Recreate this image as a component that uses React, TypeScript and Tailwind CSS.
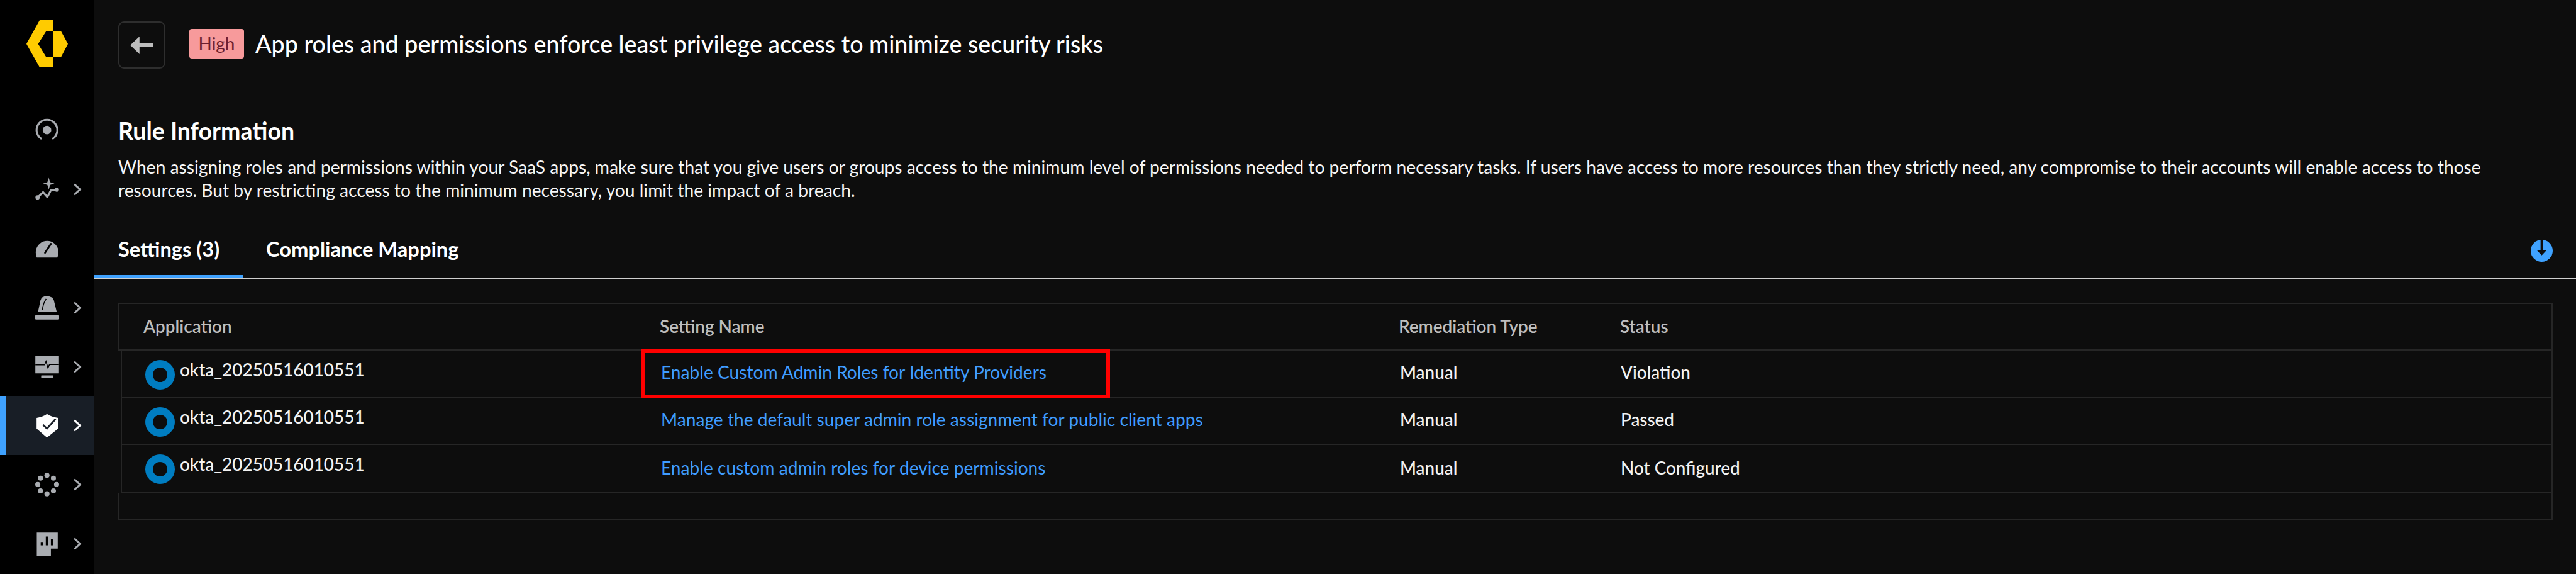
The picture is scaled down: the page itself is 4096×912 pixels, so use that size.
import React from "react";

const GRAY = "#a9acb1";

function Chevron({ color = GRAY }: { color?: string }) {
  return (
    <svg viewBox="0 0 46 66" className="w-[14px] h-[20px]">
      <path d="M7 5 L37 33 L7 61" fill="none" stroke={color} strokeWidth="10" />
    </svg>
  );
}

function Radar() {
  return (
    <svg viewBox="178 605 122 122" className="w-[38px] h-[38px]">
      <circle cx="238" cy="665" r="22" fill={GRAY} />
      <path d="M207 708 A53 53 0 1 1 269 708" fill="none" stroke={GRAY} strokeWidth="10" strokeLinecap="round" />
    </svg>
  );
}

function Spark() {
  return (
    <svg viewBox="178 910 122 122" className="w-[38px] h-[38px]">
      <path d="M190 1012 L218 985 L240 1010 L258 975 L290 972" fill="none" stroke={GRAY} strokeWidth="10" strokeLinejoin="round" />
      <circle cx="190" cy="1012" r="11" fill={GRAY} />
      <circle cx="288" cy="972" r="11" fill={GRAY} />
      <path d="M247 912 L254 934 L276 941 L254 948 L247 970 L240 948 L218 941 L240 934 Z" fill={GRAY} />
    </svg>
  );
}

function Gauge() {
  return (
    <svg viewBox="178 1220 122 105" className="w-[38px] h-[33px]">
      <path d="M186 1320 Q178 1300 182 1282 A58 58 0 0 1 296 1282 Q299 1302 291 1320 Z" fill={GRAY} />
      <path d="M228 1296 L258 1250" stroke="#000" strokeWidth="9" strokeLinecap="round" />
    </svg>
  );
}

function Alarm() {
  return (
    <svg viewBox="178 72 122 122" className="w-[38px] h-[38px]">
      <path d="M192 155 L205 95 Q210 74 236 74 Q266 74 273 95 L288 155 Z" fill={GRAY} />
      <path d="M214 145 Q219 108 234 88" fill="none" stroke="#000" strokeWidth="5" />
      <rect x="178" y="170" width="122" height="23" rx="4" fill={GRAY} />
    </svg>
  );
}

function Monitor() {
  return (
    <svg viewBox="178 375 122 120" className="w-[38px] h-[37px]">
      <rect x="178" y="378" width="122" height="92" rx="2" fill={GRAY} />
      <path d="M178 426 H226 L233 408 L243 442 L251 424 H300" fill="none" stroke="#000" strokeWidth="5" />
      <rect x="208" y="480" width="62" height="12" rx="2" fill={GRAY} />
    </svg>
  );
}

function Shield() {
  return (
    <svg viewBox="178 675 122 125" className="w-[38px] h-[39px]">
      <path d="M185 697 Q215 693 238 677 Q262 693 295 697 L295 752 L238 798 L185 752 Z" fill="#fff" />
      <path d="M218 733 L238 752 L282 703" fill="none" stroke="#1a2029" strokeWidth="9" />
    </svg>
  );
}

function Dots() {
  const pts = [
    [238, 994],
    [271, 1008],
    [287, 1040],
    [271, 1073],
    [238, 1088],
    [205, 1073],
    [191, 1040],
    [205, 1008],
  ];
  return (
    <svg viewBox="178 980 122 122" className="w-[38px] h-[38px]">
      {pts.map(([x, y]) => (
        <circle key={`${x}-${y}`} cx={x} cy={y} r="13" fill={GRAY} />
      ))}
    </svg>
  );
}

function Report() {
  return (
    <svg viewBox="178 1282 122 125" className="w-[38px] h-[39px]">
      <path d="M186 1286 H293 V1368 H258 V1405 H186 Z" fill={GRAY} />
      <rect x="206" y="1334" width="11" height="17" fill="#000" />
      <rect x="232" y="1306" width="11" height="45" fill="#000" />
      <rect x="258" y="1320" width="11" height="31" fill="#000" />
    </svg>
  );
}

function NavItem({ icon, chevron = true, active = false }: { icon: React.ReactNode; chevron?: boolean; active?: boolean }) {
  return (
    <div className={`h-[93.9px] flex items-center ${active ? "bg-[#181e26] border-l-[9px] border-[#3fa2ff]" : "border-l-[9px] border-transparent"}`}>
      <div className="w-[56px] ml-[37.5px] flex justify-center">{icon}</div>
      <div className="ml-[13.5px]">{chevron && <Chevron color={active ? "#ffffff" : GRAY} />}</div>
    </div>
  );
}

function Okta({ name }: { name: string }) {
  return (
    <div className="flex items-start pl-[37px] pt-[15px] gap-[8px]">
      <div className="w-[47px] h-[47px] rounded-full border-[12px] border-[#007dc1] shrink-0" />
      <span className="-mt-[3px] text-[27.9px] leading-[37.2px] font-medium text-[#f2f2f2]">{name}</span>
    </div>
  );
}

const rows = [
  { setting: "Enable Custom Admin Roles for Identity Providers", status: "Violation", h: "h-[75px] pb-[3px]", mark: true },
  { setting: "Manage the default super admin role assignment for public client apps", status: "Passed", h: "h-[74.5px] pb-[3px]", mark: false },
  { setting: "Enable custom admin roles for device permissions", status: "Not Configured", h: "h-[77px]", mark: false },
];

export default function App() {
  return (
    <div className="w-[4096px] h-[912px] flex bg-[#0d0d0d] overflow-hidden font-['Lato',sans-serif] text-white">
      <aside className="w-[149px] shrink-0 bg-black flex flex-col">
        <div className="h-[160px] pt-[32px] pl-[42px]">
          <svg viewBox="137 108 213 242" className="w-[66px] h-[75px]">
            <path d="M137 230 L205 108 H275 V165 H238 L197 230 L238 297 H275 V350 H205 Z" fill="#ffcb00" />
            <path d="M275 165 H315 L350 230 L315 297 H275 Z" fill="#ffcb00" />
          </svg>
        </div>
        <NavItem icon={<Radar />} chevron={false} />
        <NavItem icon={<Spark />} />
        <NavItem icon={<Gauge />} chevron={false} />
        <NavItem icon={<Alarm />} />
        <NavItem icon={<Monitor />} />
        <NavItem icon={<Shield />} active />
        <NavItem icon={<Dots />} />
        <NavItem icon={<Report />} />
      </aside>

      <main className="flex-1 min-w-0 flex flex-col">
        <div className="pl-[39px] pt-[34px] flex items-start">
          <button className="w-[75px] h-[75px] rounded-[9px] border-2 border-[#2e2e2e] flex items-center justify-center">
            <svg viewBox="0 0 118 90" className="w-[37px] h-[28px]">
              <path d="M0 44 L47 0 V33 H117 V55 H47 V90 Z" fill="#bdbdbd" />
            </svg>
          </button>
          <span className="ml-[38px] mt-[12px] w-[87px] h-[47px] rounded-[4px] bg-[#f79a9b] text-[#6d1f2e] text-[27.9px] leading-[44px] text-center">High</span>
          <h1 className="ml-[18px] mt-[14px] text-[37.65px] leading-[44px] font-medium text-white">
            App roles and permissions enforce least privilege access to minimize security risks
          </h1>
        </div>

        <section className="pl-[39px] pr-[37px] mt-[79px]">
          <h2 className="text-[37.5px] leading-[40px] font-bold text-white">Rule Information</h2>
          <p className="mt-[18.6px] text-[28.2px] leading-[37.2px] text-[#f5f5f5]">
            When assigning roles and permissions within your SaaS apps, make sure that you give users or groups access to the minimum level of permissions needed to perform necessary tasks. If users have access to more resources than they strictly need, any compromise to their accounts will enable access to those resources. But by restricting access to the minimum necessary, you limit the impact of a breach.
          </p>
        </section>

        <div className="mt-[39px] h-[84px] border-b-[3px] border-[#cfcfcf] flex items-start">
          <div className="w-[237px] h-[82px] border-b-[5px] border-[#3fa2ff] pl-[39px] pt-[14px] text-[32.6px] leading-[44px] font-bold text-white">Settings (3)</div>
          <div className="ml-[37px] pt-[14px] text-[32.7px] leading-[44px] font-bold text-white">Compliance Mapping</div>
          <div className="ml-auto mr-[37px] mt-[21px]">
            <svg viewBox="0 0 38 38" className="w-[35px] h-[35px]">
              <circle cx="19" cy="19" r="19" fill="#3fa2ff" />
              <path d="M17 0 H21 V18 H27.5 L19 27 L10.5 18 H17 Z" fill="#0d0d0d" />
            </svg>
          </div>
        </div>

        <div className="ml-[39px] mr-[37px] mt-[37px] border-y-2 border-r-2 border-[#262626]">
          <div className="h-[74px] border-l-2 border-b-2 border-[#262626] grid grid-cols-[859px_1175px_352px_1fr] items-center text-[27.9px] leading-[37.2px] font-semibold text-[#bdbdbd]">
            <div className="pl-[38px]">Application</div>
            <div>Setting Name</div>
            <div>Remediation Type</div>
            <div>Status</div>
          </div>
          <div className="ml-[4px] border-l-2 border-[#262626]">
            {rows.map((r) => (
              <div key={r.setting} className={`relative ${r.h} border-b-2 border-[#262626] grid grid-cols-[857px_1175px_351px_1fr] items-start`}>
                <Okta name="okta_20250516010551" />
                <div className="h-full flex items-center text-[28.15px] leading-[37.2px] text-[#3f9cff]">{r.setting}</div>
                <div className="h-full flex items-center text-[27.9px] leading-[37.2px] font-medium text-[#f2f2f2]">Manual</div>
                <div className="h-full flex items-center text-[27.9px] leading-[37.2px] font-medium text-[#f2f2f2]">{r.status}</div>
                {r.mark && <div className="absolute left-[825px] top-[-2px] w-[746px] h-[78px] border-[6.5px] border-[#ff0000]" />}
              </div>
            ))}
          </div>
          <div className="h-[40px] border-l-2 border-[#262626]" />
        </div>
      </main>
    </div>
  );
}
